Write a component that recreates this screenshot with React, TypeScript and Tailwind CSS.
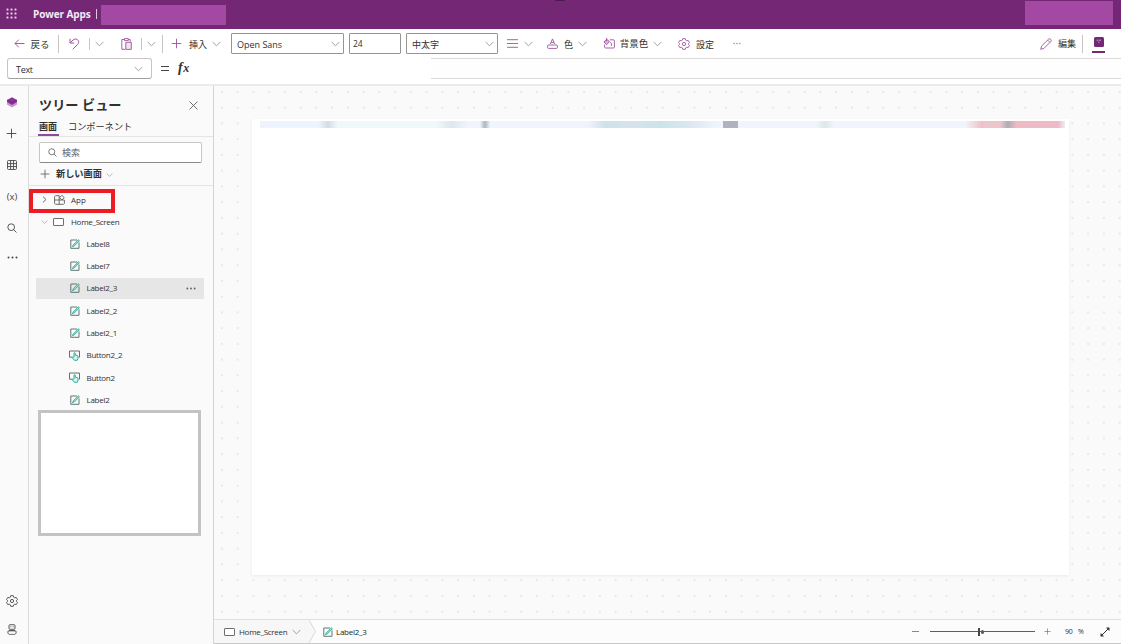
import type { ReactNode } from 'react';

type IconProps = { className?: string };

function Chevron({ className = '' }: IconProps) {
  return (
    <svg viewBox="0 0 9 6" className={`w-[9px] h-[6px] shrink-0 ${className}`} fill="none" stroke="#979593" strokeWidth="0.9">
      <path d="M0.7 1L4.5 4.8L8.3 1" />
    </svg>
  );
}

function PlusIcon({ className = '' }: IconProps) {
  return (
    <svg viewBox="0 0 12 12" className={`shrink-0 ${className}`} fill="none" stroke="currentColor">
      <path d="M6 0.8V11.2M0.8 6H11.2" />
    </svg>
  );
}

function GearIcon({ className = '' }: IconProps) {
  return (
    <svg viewBox="0 0 12 12" className={`w-3 h-3 shrink-0 ${className}`} fill="none" stroke="currentColor" strokeWidth="0.9" strokeLinejoin="round">
      <path d="M4.7 0.7H7.3L7.7 2.2L8.7 2.8L10.2 2.4L11.5 4.6L10.4 5.6V6.4L11.5 7.4L10.2 9.6L8.7 9.2L7.7 9.8L7.3 11.3H4.7L4.3 9.8L3.3 9.2L1.8 9.6L0.5 7.4L1.6 6.4V5.6L0.5 4.6L1.8 2.4L3.3 2.8L4.3 2.2Z" />
      <circle cx="6" cy="6" r="1.6" />
    </svg>
  );
}

function SearchIcon({ className = '' }: IconProps) {
  return (
    <svg viewBox="0 0 11 11" className={`shrink-0 ${className}`} fill="none" stroke="currentColor">
      <circle cx="4.6" cy="4.6" r="3.7" />
      <path d="M7.3 7.3L10.4 10.4" />
    </svg>
  );
}

function LabelIcon({ className = '' }: IconProps) {
  return (
    <svg viewBox="0 0 10 10" className={`w-[10px] h-[10px] shrink-0 ${className}`} fill="none">
      <path d="M7 1H0.8V9.3H9V3.4" stroke="#4f6664" strokeWidth="0.9" />
      <path d="M2.4 7.8L3.1 5.9L8.4 0.7L9.5 1.7L4.3 7Z" fill="#8fdccf" stroke="#1fa08f" strokeWidth="0.7" />
    </svg>
  );
}

function ButtonIcon() {
  return (
    <svg viewBox="0 0 11 11" className="w-[11px] h-[11px] shrink-0" fill="none">
      <path d="M3.5 7.2H0.5V1H10.5V7.2H9.6" stroke="#605e5c" strokeWidth="0.9" />
      <path d="M5 7V3.3C5 2.5 6.3 2.5 6.3 3.3V5.2L8.6 5.7C9.3 6 9.3 8.6 8.2 10.3H5.4L3.1 7.6C3.5 6.7 4.3 6.8 5 7.6" fill="#d3f5ef" stroke="#1fa08f" strokeWidth="0.9" />
    </svg>
  );
}

function ScreenIcon() {
  return <div className="w-[11px] h-[8px] shrink-0 rounded-[1px] border border-[#706e6c] bg-white" />;
}

function MoreIcon({ className = '' }: IconProps) {
  return (
    <svg viewBox="0 0 11 3" className={`shrink-0 ${className}`} fill="currentColor">
      <circle cx="1.5" cy="1.5" r="1" />
      <circle cx="5.5" cy="1.5" r="1" />
      <circle cx="9.5" cy="1.5" r="1" />
    </svg>
  );
}

function Divider({ className = '' }: IconProps) {
  return <div className={`w-px shrink-0 bg-[#c8c6c4] ${className}`} />;
}

function Slot({ className, children }: { className: string; children: ReactNode }) {
  return <div className={`shrink-0 flex items-center justify-center whitespace-nowrap ${className}`}>{children}</div>;
}

const controls = [
  { name: 'Label8', kind: 'label' },
  { name: 'Label7', kind: 'label' },
  { name: 'Label2_3', kind: 'label', selected: true },
  { name: 'Label2_2', kind: 'label' },
  { name: 'Label2_1', kind: 'label' },
  { name: 'Button2_2', kind: 'button' },
  { name: 'Button2', kind: 'button' },
  { name: 'Label2', kind: 'label' },
];

function TopBar() {
  return (
    <header className="h-[29px] shrink-0 bg-[#742774] flex">
      <svg viewBox="0 0 11 11" className="w-[11px] h-[11px] ml-[6px] mt-[8px]" fill="#e6d2e6">
        {[1.5, 5.5, 9.5].map((y) => [1.5, 5.5, 9.5].map((x) => <rect key={`${x}-${y}`} x={x - 1} y={y - 1} width="2" height="2" rx="0.6" />))}
      </svg>
      <div className="ml-[16px] w-[62px] h-[27px] flex items-center text-[10px] font-bold tracking-[-0.1px] text-[#f6eaf6] whitespace-nowrap">Power Apps</div>
      <div className="w-px h-[10px] mt-[9px] ml-[1px] bg-[#e3c6e3]" />
      <div className="w-[125px] h-[20px] ml-[4px] mt-[5px] bg-[#a349a4]" />
      <div className="w-[10px] h-px ml-[329px] bg-[#4c1a4c] rounded-b-full" />
      <div className="w-[88px] h-[24px] ml-auto mr-[8px] mt-px bg-[#a349a4]" />
    </header>
  );
}

function CommandBar() {
  return (
    <div className="h-[29px] shrink-0 bg-white flex items-center text-[9px] text-[#323130]">
      <Slot className="w-[12px] ml-[13px]">
        <svg viewBox="0 0 12 10" className="w-[11px] h-[9px]" fill="none" stroke="#8b548b">
          <path d="M11.5 5H1M5.2 0.8L1 5L5.2 9.2" />
        </svg>
      </Slot>
      <Slot className="w-[20px] ml-[5px] pt-[2px] text-[9.5px]">戻る</Slot>
      <Divider className="h-[18px] ml-[8px]" />
      <Slot className="w-[12px] ml-[9px]">
        <svg viewBox="0 0 11 12" className="w-[11px] h-[12px]" fill="none" stroke="#9c559c">
          <path d="M1 0.8V5H5.2M1.2 4.8L4 2C7.8 -1 11.5 3.4 8.7 6.3L3.8 11.3" />
        </svg>
      </Slot>
      <Divider className="h-[12px] ml-[9px]" />
      <Chevron className="ml-[5px]" />
      <Slot className="w-[12px] ml-[16px]">
        <svg viewBox="0 0 11 12" className="w-[11px] h-[12px]" fill="none" stroke="#9c559c" strokeWidth="0.9">
          <path d="M3.5 1.5H0.8V11.3H4.2M7.3 1.5H9.2V3.8M3.5 0.6H7.3V2.6H3.5Z" />
          <path d="M4.8 4.3H10.3V11.4H4.8Z" fill="#f1e1f1" />
        </svg>
      </Slot>
      <Divider className="h-[12px] ml-[9px]" />
      <Chevron className="ml-[5px]" />
      <Divider className="h-[18px] ml-[6px]" />
      <PlusIcon className="w-[11px] h-[11px] ml-[8px] text-[#9c559c]" />
      <Slot className="w-[20px] ml-[6px] pt-px">挿入</Slot>
      <Chevron className="ml-[4px]" />
      <div className="w-[113px] h-[21px] ml-[10px] border border-[#979593] rounded-[1px] flex items-center justify-between pl-[5px] pr-[3px] pt-px shrink-0">
        Open Sans <Chevron />
      </div>
      <div className="w-[52px] h-[21px] ml-[5px] border border-[#979593] rounded-[1px] flex items-center pl-[3px] pt-px text-[8.5px] tracking-[-0.2px] shrink-0">24</div>
      <div className="w-[92px] h-[21px] ml-[5px] border border-[#979593] rounded-[1px] flex items-center justify-between pl-[5px] pr-[3px] pt-px shrink-0">
        中太字 <Chevron />
      </div>
      <svg viewBox="0 0 11 9" className="w-[11px] h-[9px] ml-[9px] shrink-0" stroke="#9c559c" strokeWidth="0.9">
        <path d="M0 0.7H11M0 4.5H11M0 8.3H11" />
      </svg>
      <Chevron className="ml-[6px]" />
      <svg viewBox="0 0 11 11" className="w-[11px] h-[11px] ml-[14px] shrink-0" fill="none" stroke="#9c559c" strokeWidth="0.9">
        <path d="M3.4 6L5.5 0.9L7.6 6M4.1 4.4H6.9" />
        <rect x="0.6" y="7" width="9.8" height="3.4" rx="1" />
      </svg>
      <Slot className="w-[11px] ml-[5px] pt-px">色</Slot>
      <Chevron className="ml-[4px]" />
      <svg viewBox="0 0 12 11" className="w-[12px] h-[11px] ml-[16px] shrink-0" fill="none" stroke="#9c559c" strokeWidth="0.9">
        <path d="M6.8 1.8H10.4C11 1.8 11.4 2.2 11.4 2.8V9C11.4 9.6 11 10 10.4 10H2.6C2 10 1.6 9.6 1.6 9V6.5" />
        <path d="M3.4 1L6.5 3.6L3.7 6.6L0.9 3.9L4.1 1.5M3.4 0V3.2" fill="#d9b9d9" />
        <path d="M7.2 4.2L8.4 5.2V8" />
      </svg>
      <Slot className="w-[30px] ml-[4px] pt-px text-[9.5px]">背景色</Slot>
      <Chevron className="ml-[4px]" />
      <GearIcon className="ml-[16px] text-[#9c559c]" />
      <Slot className="w-[20px] ml-[5px] pt-px">設定</Slot>
      <MoreIcon className="w-[8px] h-[3px] ml-[18px] text-[#8a8886]" />
      <svg viewBox="0 0 12 12" className="w-[12px] h-[12px] ml-auto shrink-0" fill="none" stroke="#9c559c" strokeWidth="0.9">
        <path d="M0.7 11.3L1.6 8L8.7 1C9.9 0 12 2 11 3.3L4 10.4ZM7.6 2.1L9.9 4.4" />
      </svg>
      <Slot className="w-[20px] ml-[5px]">編集</Slot>
      <Divider className="h-[18px] ml-[5px]" />
      <div className="w-[13px] h-[16px] ml-[9px] mr-[16px] mt-[3px] shrink-0 border-b-2 border-[#742774] flex items-start justify-center">
        <svg viewBox="0 0 10 10" className="w-[10px] h-[10px]">
          <rect width="10" height="10" rx="1.5" fill="#742774" />
          <path d="M2.5 3.2H4M4.5 3.2H7M4 5.2H5.5" stroke="#d7b5d7" strokeWidth="0.8" />
        </svg>
      </div>
    </div>
  );
}

function FormulaBar() {
  return (
    <div className="h-[28px] shrink-0 bg-white border-b-2 border-[#ebebeb] flex items-start">
      <div className="w-[145px] h-[21px] ml-[7px] border border-[#c8c6c4] border-b-[#a19f9d] rounded-[3px] flex items-center justify-between pl-[8px] pr-[8px] pt-px text-[9px] tracking-[-0.3px] text-[#323130]">
        Text <Chevron />
      </div>
      <svg viewBox="0 0 8 5" className="w-[8px] h-[5px] ml-[9px] mt-[8px]" stroke="#484644">
        <path d="M0 0.5H8M0 4.5H8" />
      </svg>
      <div className="ml-[9px] w-[13px] h-[20px] font-['Liberation_Serif'] italic font-semibold text-[14px] leading-[20px] text-[#323130] whitespace-nowrap">
        f<span className="ml-[0.5px] text-[12px]">x</span>
      </div>
      <div className="ml-auto w-[690px] h-[21px] border-y border-[#dcdad8] bg-[#fffefe]" />
    </div>
  );
}

function Rail() {
  return (
    <nav className="w-[29px] shrink-0 border-r border-[#dcdcdc] flex flex-col items-center pr-[4px] text-[#484644]">
      <svg viewBox="0 0 10 11" className="w-[10px] h-[11px] mt-[11px]">
        <path d="M0 5V7.5L5 10.5L10 7.5V5Z" fill="#c995d0" />
        <path d="M0 3V5L5 8L10 5V3L5 0.3Z" fill="#8b3398" />
        <path d="M0.5 3L5 5.7L9.5 3" stroke="#6a1f70" strokeWidth="0.7" fill="none" />
      </svg>
      <PlusIcon className="w-[11px] h-[11px] mt-[20px] mr-px" />
      <svg viewBox="0 0 11 11" className="w-[10px] h-[10px] mt-[21px]" fill="none" stroke="currentColor">
        <rect x="0.6" y="0.6" width="9.8" height="9.8" rx="1" />
        <path d="M4 0.6V10.4M7.2 0.6V10.4M0.6 4H10.4M0.6 7.2H10.4" />
      </svg>
      <div className="h-[12px] mt-[21px] text-[9.5px] leading-[12px]">(x)</div>
      <SearchIcon className="w-[10px] h-[10px] mt-[20px]" />
      <MoreIcon className="w-[11px] h-[3px] mt-[23px]" />
      <GearIcon className="mt-auto" />
      <svg viewBox="0 0 10 11" className="w-[10px] h-[11px] mt-[17px] mb-[9px]" fill="none" stroke="currentColor" strokeWidth="0.9">
        <rect x="2" y="0.7" width="6" height="4.6" rx="1" />
        <path d="M3.8 2.3V3.2M6.2 2.3V3.2M1.8 6.7H8.2M0.8 7.6C0.8 6.3 9.2 6.3 9.2 7.6C9.2 11 7 10.4 5 10.4C3 10.4 0.8 11 0.8 7.6Z" />
      </svg>
    </nav>
  );
}

function TreeView() {
  return (
    <aside className="w-[185px] shrink-0 border-r border-[#d4d4d4] flex flex-col text-[#323130]">
      <div className="h-[30px] flex items-end pl-[10px] pr-[15px] justify-between">
        <h2 className="text-[13.2px] font-bold leading-[21px] whitespace-nowrap">ツリー ビュー</h2>
        <svg viewBox="0 0 9 9" className="w-[9px] h-[9px] mb-[6px]" stroke="#605e5c" strokeWidth="0.9">
          <path d="M0.5 0.5L8.5 8.5M8.5 0.5L0.5 8.5" />
        </svg>
      </div>
      <div className="h-[21px] border-b border-[#e4e4e4] flex pl-[9px] text-[9px] leading-[21px] whitespace-nowrap">
        <div className="w-[21px] pr-px text-center font-bold border-b-2 border-[#8f4aa0]">画面</div>
        <div className="ml-[9px] text-[9.2px]">コンポーネント</div>
      </div>
      <div className="w-[163px] h-[21px] mt-[5px] ml-[10px] shrink-0 bg-white border border-[#c8c6c4] border-b-[#8a8886] rounded-[2px] flex items-center pl-[8px] text-[9px] text-[#605e5c]">
        <SearchIcon className="w-[9px] h-[9px] mr-[5px]" />
        検索
      </div>
      <div className="h-[23px] border-b border-[#e4e4e4] flex items-center pl-[11px] pb-px text-[9.2px] font-bold">
        <PlusIcon className="w-[10px] h-[10px] mr-[6px] text-[#605e5c]" />
        新しい画面
        <Chevron className="ml-[3px] mt-[2px] scale-75" />
      </div>
      <div className="w-[86px] h-[24px] mt-[3px] shrink-0 border-4 border-[#ed1c24] flex items-center pl-[9px] pb-[3px] text-[8px]">
        <svg viewBox="0 0 5 7" className="w-[5px] h-[7px]" fill="none" stroke="#605e5c" strokeWidth="0.9">
          <path d="M1 0.7L4 3.5L1 6.3" />
        </svg>
        <svg viewBox="0 0 11 10" className="w-[11px] h-[10px] ml-[7px] mr-[6px]" fill="none" stroke="#605e5c" strokeWidth="0.9">
          <path d="M5.2 0.7H1.5L0.6 1.6V8.4L1.5 9.3H9.5L10.4 8.4V5H0.6M5.2 0.7V9.3" />
          <path d="M7.9 0.4L10.3 2.6L7.9 4.9L5.6 2.6Z" />
        </svg>
        App
      </div>
      <div className="h-[20px] flex items-center pl-[11px] pb-[2px] text-[8px] tracking-[-0.28px]">
        <Chevron className="scale-75" />
        <div className="ml-[4px] mr-[7px]"><ScreenIcon /></div>
        Home_Screen
      </div>
      <ul className="flex flex-col text-[8px] tracking-[-0.25px]">
        {controls.map((c) => (
          <li key={c.name} className="h-[22.35px] flex items-center px-[7px]">
            <div className={`w-full h-[21px] flex items-center pr-[8px] pb-px mr-[2px] rounded-[1px] ${c.selected ? 'bg-[#e6e6e6]' : ''}`}>
              <div className="w-[11px] ml-[33px] mr-[6.5px] flex justify-center">{c.kind === 'label' ? <LabelIcon /> : <ButtonIcon />}</div>
              {c.name}
              {c.selected && <MoreIcon className="w-[10px] h-[3px] ml-auto text-[#605e5c]" />}
            </div>
          </li>
        ))}
      </ul>
      <div className="w-[163px] h-[126px] -mt-[2px] ml-[9px] shrink-0 bg-white border-[3px] border-[#c3c3c3]" />
    </aside>
  );
}

function StatusBar() {
  return (
    <footer className="h-[25px] shrink-0 border-t border-[#e1dfdd] bg-[#fcfcfc] flex items-center text-[8px] tracking-[-0.28px] text-[#323130] border-b border-b-[#c8c8c8]">
      <div className="w-[95px] h-full bg-[#f7f7f7] flex items-center pl-[10px]">
        <ScreenIcon />
        <span className="w-[49px] ml-[4px]">Home_Screen</span>
        <Chevron className="ml-[4px]" />
      </div>
      <svg viewBox="0 0 7 23" className="w-[7px] h-[23px]" fill="#f7f7f7" stroke="#d2d0ce" strokeWidth="0.8">
        <path d="M0 0L6.5 11.5L0 23" />
      </svg>
      <LabelIcon className="ml-[7px]" />
      <span className="ml-[3px] text-[#201f1e]">Label2_3</span>
      <div className="w-[7px] h-px ml-auto bg-[#8a8886]" />
      <div className="relative w-[105px] h-[10px] ml-[11px] flex items-center">
        <div className="w-full h-[1.5px] bg-[#605e5c]" />
        <div className="absolute left-[48px] top-px w-[2px] h-[8px] bg-[#484644]" />
        <div className="absolute left-[51px] top-[3px] w-[3px] h-[4px] rounded-full bg-[#605e5c]" />
      </div>
      <PlusIcon className="w-[7px] h-[7px] ml-[9px] text-[#605e5c]" />
      <span className="w-[9px] ml-[14px] text-[7px]">90</span>
      <span className="w-[7px] ml-[4px] text-[7px]">%</span>
      <svg viewBox="0 0 10 10" className="w-[10px] h-[10px] ml-[15px] mr-[11px]" fill="#323130" stroke="#323130">
        <path d="M1 9L9 1" />
        <path d="M6.5 0.8H9.2V3.5ZM0.8 6.5V9.2H3.5Z" strokeWidth="0.5" />
      </svg>
    </footer>
  );
}

function Canvas() {
  return (
    <main className="flex-1 min-w-0 flex flex-col">
      <div className="flex-1 pl-[38px] pt-[33px] bg-[#fafafa] bg-[radial-gradient(circle_at_50%_50%,#e8e8e8_0.8px,transparent_1.2px)] bg-[length:15.75px_15.75px] bg-[position:0px_-2px]">
        <div className="w-[817px] h-[456px] bg-white shadow-[0_1px_3px_rgba(0,0,0,0.06)] pt-[2px] pl-[8px]">
          <div className="w-[805px] h-[7px] flex bg-[#f0f5fd]">
            <div className="w-[58px] h-full bg-[#edf4fe]" />
            <div className="w-[20px] h-full bg-linear-to-r from-[#edf4fe] via-[#d6dce5] to-[#f0f8fc]" />
            <div className="w-[98px] h-full bg-[#f0f8fc]" />
            <div className="w-[32px] h-full bg-linear-to-r from-[#f0f8fc] via-[#dee6ee] to-[#f0f5fd]" />
            <div className="w-[10px] h-full ml-[12px] bg-linear-to-r from-[#edf4fa] via-[#aeb7bd] to-[#edf4fa]" />
            <div className="w-[18px] h-full ml-[97px] bg-linear-to-r from-[#f0f5fd] to-[#cfe2e9]" />
            <div className="w-[55px] h-full bg-linear-to-r from-[#cfe2e9] via-[#d6e3ed] to-[#cae4ea]" />
            <div className="w-[59px] h-full bg-linear-to-r from-[#cae4ea] via-[#dce7f0] to-[#f0f5fd]" />
            <div className="w-[15px] h-full ml-[4px] bg-[#afb3bf]" />
            <div className="w-[18px] h-full ml-[78px] bg-linear-to-r from-[#f0f5fd] via-[#dee7e9] to-[#f0f5fd]" />
            <div className="w-[18px] h-full ml-[131px] bg-linear-to-r from-[#f0f5fd] to-[#edbdc5]" />
            <div className="w-[17px] h-full bg-[#edc6cd]" />
            <div className="w-[16px] h-full bg-linear-to-r from-[#edc6cd] via-[#b1abb3] to-[#edbac6]" />
            <div className="w-[42px] h-full bg-[#edbac6]" />
            <div className="flex-1 h-full bg-linear-to-r from-[#edbac6] to-[#eceef6]" />
          </div>
        </div>
      </div>
      <StatusBar />
    </main>
  );
}

export default function App() {
  return (
    <div className="w-[1121px] h-[644px] overflow-hidden flex flex-col bg-[#fafafa] font-['Open_Sans','Noto_Sans_CJK_JP',sans-serif] leading-none">
      <TopBar />
      <CommandBar />
      <FormulaBar />
      <div className="flex-1 min-h-0 flex">
        <Rail />
        <TreeView />
        <Canvas />
      </div>
    </div>
  );
}
